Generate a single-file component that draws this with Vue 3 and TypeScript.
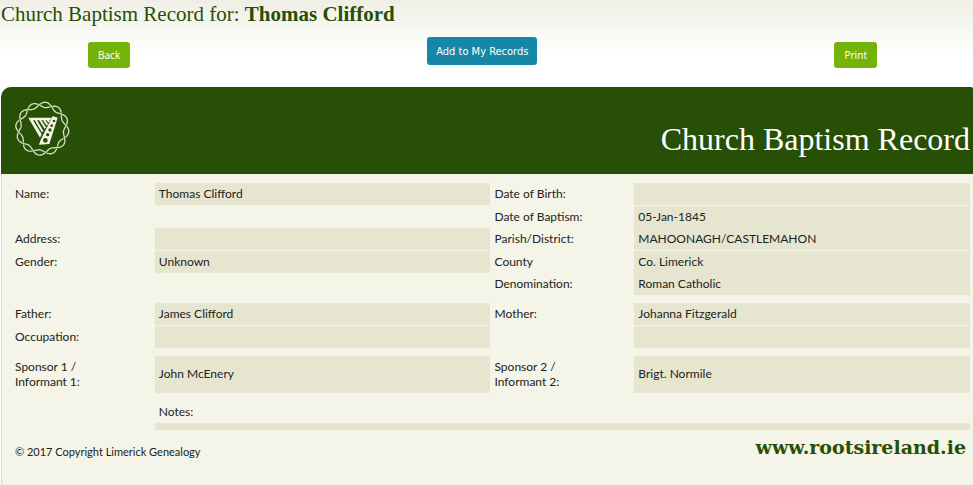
<script setup lang="ts">
interface Field {
  label: string
  value: string
  filled: boolean
}

interface RecordRow {
  left: Field
  right: Field
  kind?: 'ruled' | 'tall'
}

const field = (label: string, value = '', filled = true): Field => ({ label, value, filled })
const blank = field('', '', false)

const groups: RecordRow[][] = [
  [
    { left: field('Name:', 'Thomas Clifford'), right: field('Date of Birth:'), kind: 'ruled' },
    { left: blank, right: field('Date of Baptism:', '05-Jan-1845') },
    { left: field('Address:'), right: field('Parish/District:', 'MAHOONAGH/CASTLEMAHON'), kind: 'ruled' },
    { left: field('Gender:', 'Unknown'), right: field('County', 'Co. Limerick') },
    { left: blank, right: field('Denomination:', 'Roman Catholic') },
  ],
  [
    { left: field('Father:', 'James Clifford'), right: field('Mother:', 'Johanna Fitzgerald'), kind: 'ruled' },
    { left: field('Occupation:'), right: field('') },
  ],
  [
    {
      left: field('Sponsor 1 /\nInformant 1:', 'John McEnery'),
      right: field('Sponsor 2 /\nInformant 2:', 'Brigt. Normile'),
      kind: 'tall',
    },
  ],
]

// One strand of the twisted ring around the harp
function strand(phase: number): string {
  const points: string[] = []
  for (let deg = 0; deg < 360; deg += 3) {
    const a = (deg * Math.PI) / 180
    const r = 72 + 8 * Math.sin(6 * a + phase)
    points.push(`${(82 + r * Math.cos(a)).toFixed(1)} ${(83 + r * Math.sin(a)).toFixed(1)}`)
  }
  return `M${points.join('L')}Z`
}

const strands = [strand(0.8), strand(0.8 + Math.PI)]

function printRecord(): void {
  window.print()
}

function goBack(): void {
  window.history.back()
}
</script>

<template>
  <main class="page">
    <h1 class="title">Church Baptism Record for: <strong>Thomas Clifford</strong></h1>

    <div class="actions">
      <button type="button" class="btn" @click="goBack">Back</button>
      <button type="button" class="btn btn-add">Add to My Records</button>
      <button type="button" class="btn" @click="printRecord">Print</button>
    </div>

    <section class="card">
      <header class="banner">
        <svg class="emblem" viewBox="0 0 168 168" aria-hidden="true">
          <template v-for="d in strands" :key="d">
            <path class="halo" :d="d" />
            <path class="ring" :d="d" />
          </template>
          <path class="harp" d="M40 50H109L106 58H54L80 100L75 110ZM113 45L128 50L103 129L72 131L77 117Z" />
          <path class="strings" d="M62 56L83 92M75 56L91 82M87 56L97 72M98 56L102 63" />
          <g class="holes">
            <circle cx="117" cy="60" r="4" />
            <circle cx="110" cy="74" r="4" />
            <circle cx="105" cy="87" r="5" />
            <circle cx="98" cy="101" r="5" />
            <circle cx="91" cy="118" r="7" />
          </g>
        </svg>
        <h2 class="banner-title">Church Baptism Record</h2>
      </header>

      <table class="record">
        <colgroup>
          <col class="col-label" />
          <col class="col-value" />
          <col class="col-label" />
          <col class="col-value" />
        </colgroup>
        <tbody v-for="(rows, g) in groups" :key="g">
          <tr v-for="(row, r) in rows" :key="r" :class="row.kind">
            <th scope="row">{{ row.left.label }}</th>
            <td :class="{ filled: row.left.filled }">{{ row.left.value }}</td>
            <th scope="row">{{ row.right.label }}</th>
            <td :class="{ filled: row.right.filled }">{{ row.right.value }}</td>
          </tr>
          <tr class="spacer"><td colspan="4"></td></tr>
        </tbody>
        <tbody>
          <tr>
            <td></td>
            <th scope="col" colspan="3">Notes:</th>
          </tr>
          <tr class="notes">
            <td></td>
            <td colspan="3" class="filled"></td>
          </tr>
        </tbody>
      </table>

      <footer class="foot">
        <small class="copyright">© 2017 Copyright Limerick Genealogy</small>
        <strong class="site">www.rootsireland.ie</strong>
      </footer>
    </section>
  </main>
</template>

<style>
body {
  background: #fff;
}
</style>

<style scoped>
.page {
  box-sizing: border-box;
  height: 100vh;
  overflow: hidden;
  padding: 0 0 0 1px;
  background: linear-gradient(#efefe6, #fff 56px);
  color: #222;
  font-family: Lato, "Liberation Sans", sans-serif;
  font-size: 12px;
}

.title {
  margin: 0;
  color: #274f05;
  font-family: "Liberation Serif", serif;
  font-size: 21px;
  font-weight: 400;
  line-height: 28px;
}

.actions {
  display: flex;
  justify-content: space-between;
  align-items: flex-start;
  height: 59px;
  box-sizing: border-box;
  padding: 14px 96px 0 87px;
}

.btn {
  height: 26px;
  padding: 0 10px;
  border: 0;
  border-radius: 3px;
  background: #74b30a;
  color: #fff;
  font-family: "Noto Sans", sans-serif;
  font-size: 10px;
  line-height: 26px;
}

.btn-add {
  height: 28px;
  margin-top: -5px;
  padding: 2px 9px 0;
  background: #1787a8;
  font-family: "DejaVu Sans Condensed", "Noto Sans", sans-serif;
  font-size: 11px;
}

.card {
  height: 404px;
  box-sizing: border-box;
  border: 1px solid #d6d9c8;
  border-width: 0 0 1px 1px;
  border-radius: 10px 2px 2px 10px;
  background: #f4f4e8;
}

.banner {
  display: flex;
  justify-content: space-between;
  align-items: flex-start;
  height: 87px;
  box-sizing: border-box;
  margin-left: -1px;
  padding: 14px 3px 0 14px;
  border-radius: 10px 2px 0 0;
  background: #274f05;
}

.emblem {
  width: 56px;
  height: 56px;
}

.ring {
  fill: none;
  stroke: #d3dfbf;
  stroke-width: 4;
}

.halo {
  fill: none;
  stroke: #274f05;
  stroke-width: 6;
}

.harp {
  fill: #f4f4e8;
}

.strings {
  fill: none;
  stroke: #f4f4e8;
  stroke-width: 6;
}

.holes {
  fill: #274f05;
}

.banner-title {
  margin: 0;
  padding-top: 20px;
  color: #fff;
  font-family: "Liberation Serif", serif;
  font-size: 32px;
  font-weight: 400;
  line-height: 36px;
}

.record {
  width: calc(100% - 12px);
  margin: 9px 3px 0 9px;
  border-spacing: 0;
  table-layout: fixed;
}

.col-label {
  width: 15%;
}

.col-value {
  width: 35%;
}

.record th,
.record td {
  height: 22px;
  box-sizing: border-box;
  padding: 0 4px 2px;
  font-weight: 400;
  line-height: 15px;
  text-align: left;
  vertical-align: middle;
  white-space: pre-line;
}

.record .filled {
  background: #e6e6d0;
  background-clip: padding-box;
}

.record .ruled th,
.record .ruled td {
  height: 23px;
  border-bottom: 1px solid #f4f4e8;
}

.record .tall th,
.record .tall td {
  height: 37px;
}

.record .spacer td {
  height: 8px;
}

.record .notes td {
  height: 7px;
}

.foot {
  display: flex;
  justify-content: space-between;
  align-items: center;
  padding: 2px 7px 0 13px;
}

.copyright {
  padding-top: 8px;
  font-size: 11px;
}

.site {
  color: #274f05;
  font-family: "DejaVu Serif", serif;
  font-size: 19px;
  line-height: 30px;
}
</style>
